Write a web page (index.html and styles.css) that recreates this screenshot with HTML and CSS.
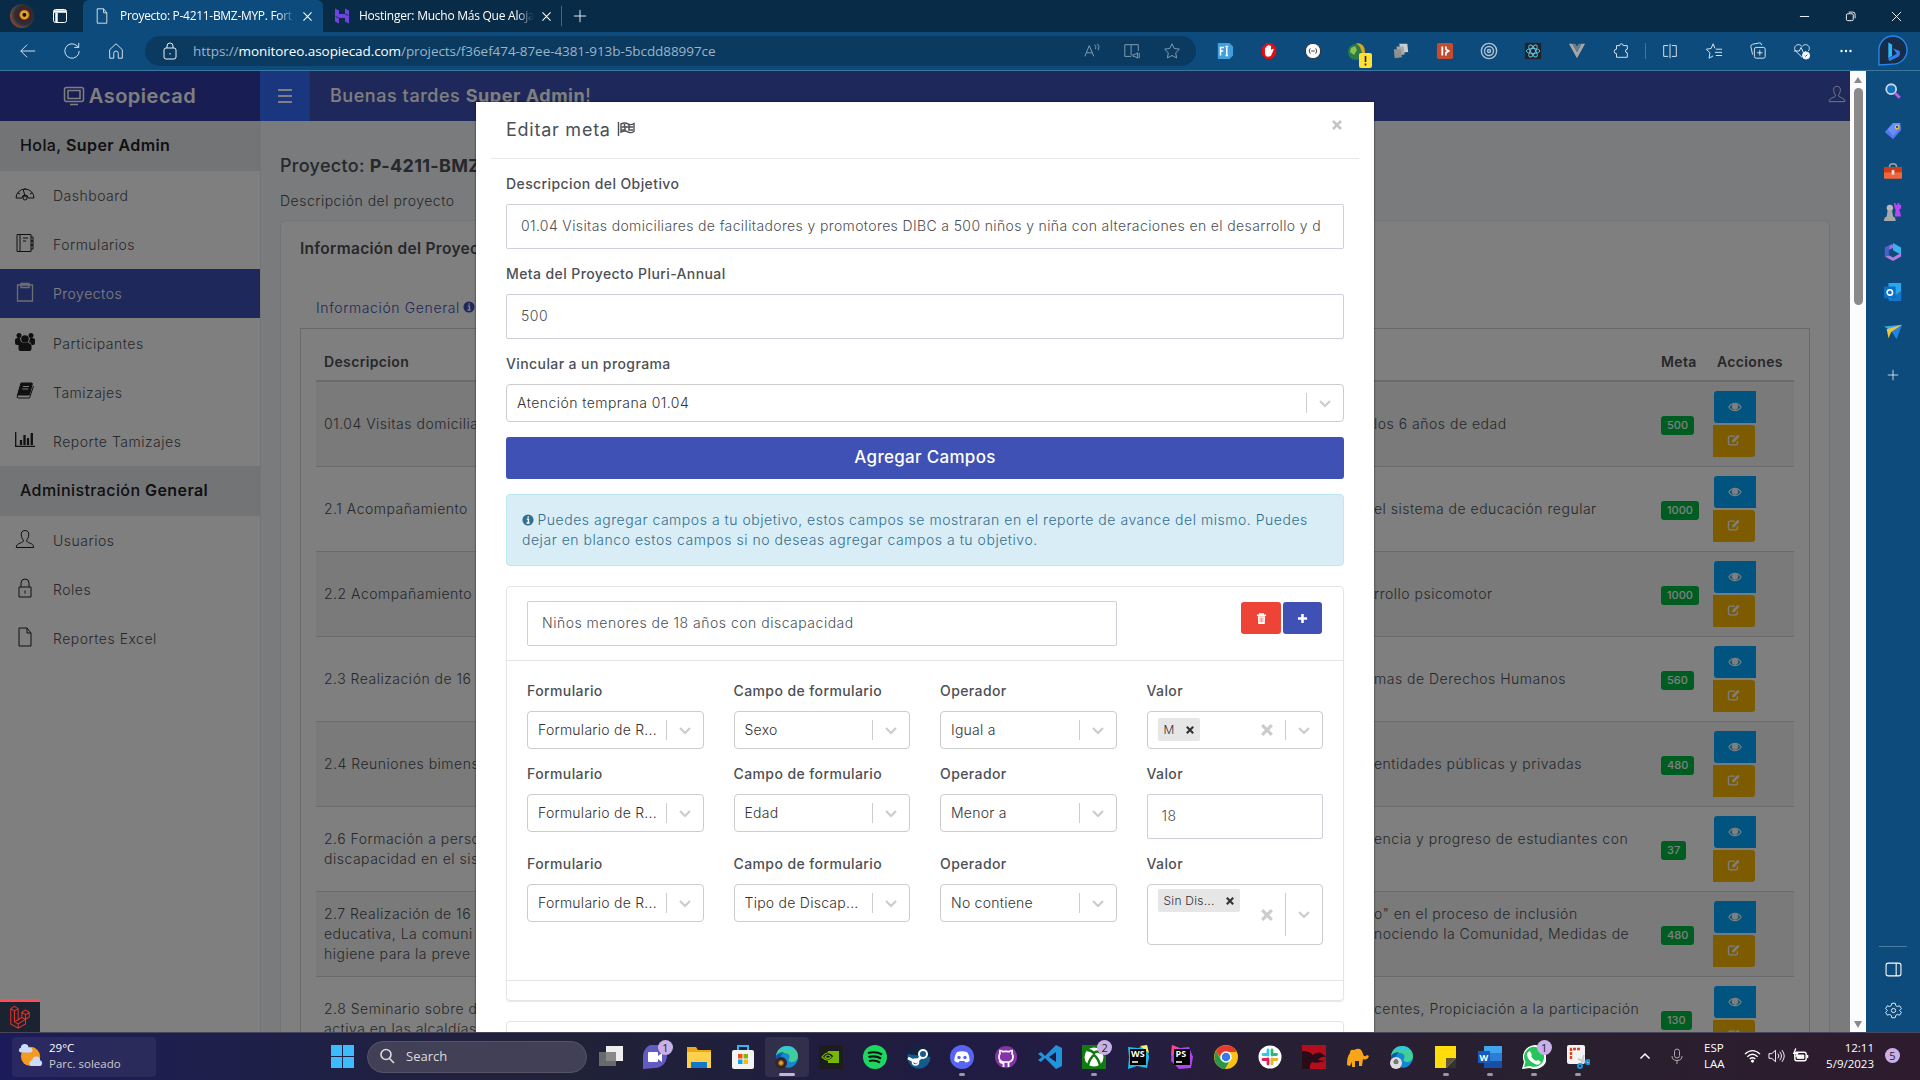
FILE: index.html
```html
<!DOCTYPE html>
<html lang="es">
<head>
  <meta charset="UTF-8">
  <meta name="viewport" content="width=device-width, initial-scale=1.0">
  <title>Proyecto: P-4211-BMZ-MYP</title>
  <link rel="stylesheet" href="styles.css">
</head>
<body>
  <svg class="sprite">
    <symbol id="x" viewBox="0 0 16 16"><path d="M3 3l10 10M13 3L3 13"/></symbol>
    <symbol id="plus" viewBox="0 0 16 16"><path d="M8 1v14M1 8h14"/></symbol>
    <symbol id="file" viewBox="0 0 20 20"><path d="M4 1h8l4 5v13H4zM12 1v5h4"/></symbol>
    <symbol id="lock" viewBox="0 0 20 20"><path d="M4 9h12v10H4zM6 9V5a4 4 0 0 1 8 0v4M10 12.5v3"/></symbol>
    <symbol id="chev" viewBox="0 0 20 20"><path d="M5 8l5 5 5-5" stroke-width="2.2"/></symbol>
    <symbol id="clear" viewBox="0 0 20 20"><path d="M6 6l8 8M14 6l-8 8" stroke-width="2.6"/></symbol>
    <symbol id="eye" viewBox="0 0 16 12"><path d="M1 6c3.500-5.500 10.500-5.500 14 0-3.500 5.500-10.500 5.500-14 0z" stroke-width="1.300"/><circle cx="8" cy="5.500" r="3.300" fill="currentColor"/></symbol>
    <symbol id="edit" viewBox="0 0 16 14"><path d="M12 8.500v2.300a2 2 0 0 1-2 2H3.500a2 2 0 0 1-2-2V4.500a2 2 0 0 1 2-2H9" stroke-width="1.500"/><path d="M6 9.500V7.300L12.500 1l2 2L8.200 9.500z" fill="currentColor" stroke="none"/></symbol>
    <symbol id="info" viewBox="0 0 14 14"><circle cx="7" cy="7" r="6.500" fill="currentColor" stroke="none"/><path class="cut" d="M5.500 6H7.500v4.500M5.300 10.500h3.600M6.500 3.500h1.500" stroke-width="1.700"/></symbol>
    <symbol id="user" viewBox="0 0 20 20"><path d="M10 1.500c-3 0-4 2-3.700 4.500.2 2.500 1 4 2 5 .3 1.700-.8 2.200-3 3-2.500 1-4 2-4 4.500h17.400c0-2.500-1.500-3.500-4-4.500-2.200-.8-3.300-1.300-3-3 1-1 1.800-2.500 2-5 .3-2.500-.7-4.500-3.700-4.500z"/></symbol>
    <symbol id="edge" viewBox="0 0 24 24"><circle cx="12" cy="12" r="11" fill="#1687d2"/><path d="M1 11C2 4 7 1 12 1c7 0 11 5 11 10 0 4-3 6-6 6-3 0-4-1-3-3 2-4-1-6-5-6-4 0-7 2-8 3z" fill="#3fcf9a"/><path d="M1 11c2-3 5-4 8-4-4 3-5 9-1 13 2 2 5 3 8 2-6 3-16 0-15-11z" fill="#0c59a4"/><path d="M3 6c5-6 14-6 18 0-6-3-12-3-18 0z" fill="#35c1f1"/></symbol>
  </svg>

  <header class="tabbar">
    <div class="profile"></div>
    <svg class="ic workspace" viewBox="0 0 16 16"><rect x="1.500" y="1.500" width="13" height="13" rx="2"/><path d="M2 3.500h12M4.500 5v9" stroke-width="2.500"/></svg>
    <div class="tab active">
      <svg class="ic tab-icon"><use href="#file"/></svg>
      <span class="tab-title first">Proyecto: P-4211-BMZ-MYP. Fort</span>
      <svg class="ic close"><use href="#x"/></svg>
    </div>
    <div class="tab second">
      <svg class="tab-icon" viewBox="0 0 16 16"><path d="M1 .500l4 2V6h5.500l4.500 2.500H1zM11 .500l4 2v5l-4-2zM15 15.500l-4-2V10H5.500L1 7.500h14zM5 15.500l-4-2v-5l4 2z" fill="#6f43df"/></svg>
      <span class="tab-title">Hostinger: Mucho Más Que Aloja</span>
      <svg class="ic close"><use href="#x"/></svg>
    </div>
    <span class="tab-sep"></span>
    <svg class="ic new-tab"><use href="#plus"/></svg>
    <div class="window-buttons">
      <svg class="ic" viewBox="0 0 12 12"><path d="M1 6h10"/></svg>
      <svg class="ic" viewBox="0 0 12 12"><rect x="1.500" y="3" width="7.500" height="7.500" rx="1.500"/><path d="M4 1.200h4.500a2.500 2.500 0 0 1 2.500 2.500V8"/></svg>
      <svg class="ic" viewBox="0 0 12 12"><path d="M1 1l10 10M11 1L1 11"/></svg>
    </div>
  </header>

  <div class="toolbar">
    <div class="nav-buttons">
      <svg class="ic" viewBox="0 0 20 20"><path d="M9 3l-7 7 7 7M2 10h16"/></svg>
      <svg class="ic" viewBox="0 0 20 20"><path d="M18 10a8 8 0 1 1-2.500-5.800L17.500 6M17.500 1v5h-5"/></svg>
      <svg class="ic" viewBox="0 0 20 20"><path d="M3 8.500L10 2l7 6.500V18h-4.500v-5.500a2.500 2.500 0 0 0-5 0V18H3z"/></svg>
    </div>
    <div class="url-bar">
      <svg class="ic url-lock" viewBox="0 0 18 20"><rect x="3" y="7" width="12" height="11" rx="2"/><path d="M6 7V5a3 3 0 0 1 6 0v2M9 12v1.500"/></svg>
      <span class="url">https://<b>monitoreo.asopiecad.com</b>/projects/f36ef474-87ee-4381-913b-5bcdd88997ce</span>
      <div class="url-icons">
        <svg class="ic" viewBox="0 0 20 20"><path d="M2 16L7 4l5 12M4 12h6M13 3q2 2 1 5M16 2q3 3 1 7"/></svg>
        <svg class="ic" viewBox="0 0 20 20"><path d="M9 16H2V3h7v12M9 3h8v7M11 14h2l3-2v6l-3-2h-2zM18 12v6"/></svg>
        <svg class="ic" viewBox="0 0 20 20"><path d="M10 2l2.500 5.200 5.700.8-4.100 4 1 5.700L10 15l-5.100 2.700 1-5.700-4.100-4 5.700-.8z"/></svg>
      </div>
    </div>
    <div class="extensions">
      <svg viewBox="0 0 20 20"><path d="M2 1h13l4 4v10l-4 4H2z" fill="#419fde"/><path d="M5 15V6h4M5 10h3M12 6v9M10.500 5h3M10.500 15h3" stroke="#fff" stroke-width="1.700" fill="none"/></svg>
      <svg viewBox="0 0 20 20"><path d="M7 1h6l5 5v8l-5 5H7l-5-5V6z" fill="#e40d12"/><path d="M5.500 10V6.500q1-1 1.700 0V4.500q1-1 1.700 0V3.500q1-1 1.700 0v1q1-1 1.700 0V9l2-1.500q1.500 0 .7 1.500L13 13.500q-1 3-3.500 3-4 0-4-4z" fill="#fff"/></svg>
      <svg viewBox="0 0 20 20"><circle cx="10" cy="10" r="8.500" fill="#fff" stroke="#222"/><path d="M7 7Q4.500 10 7 13M13 7q2.500 3 0 6M8 10h4" stroke="#333" fill="none"/></svg>
      <svg class="warn-ext" viewBox="0 0 26 26"><circle cx="9" cy="10" r="8" fill="#2a7a4c"/><path d="M9 1q9 0 9 9 0 5-4 7l-1-4 2-2-2-6z" fill="#d8a51c"/><path d="M4 6l4-2 2 4-3 5-4-3z" fill="#8bc34a"/><rect x="12" y="11" width="13" height="15" rx="2" fill="#ffe034"/><path d="M18.500 14v6M18.500 21.500v2" stroke="#222" stroke-width="1.600"/></svg>
      <svg viewBox="0 0 20 20"><path d="M8 2h9l1 9-8 1z" fill="#ccc"/><path d="M5 5h8l1 9-8 1z" fill="#aaa"/><path d="M2 8h8l1 9-8 1z" fill="#8f8f8f"/></svg>
      <svg viewBox="0 0 20 20"><rect x="1" y="1" width="18" height="18" rx="2" fill="#c54b2f"/><path d="M7 5v10M11 5v3l3 2-3 2v3" stroke="#fff" stroke-width="2" fill="none"/></svg>
      <svg viewBox="0 0 20 20" fill="none" stroke="#aec1d1" stroke-width="1.600"><circle cx="10" cy="10" r="8.500"/><circle cx="10" cy="10" r="5"/><circle cx="10" cy="10" r="1.700"/></svg>
      <svg viewBox="0 0 20 20"><path d="M1 1h18v18H1z" fill="#20232a"/><g fill="none" stroke="#61c9e8"><ellipse cx="10" cy="10" rx="7.500" ry="2.800"/><ellipse cx="10" cy="10" rx="7.500" ry="2.800" transform="rotate(60 10 10)"/><ellipse cx="10" cy="10" rx="7.500" ry="2.800" transform="rotate(120 10 10)"/></g></svg>
      <svg viewBox="0 0 20 20"><path d="M1 2h4l5 9 5-9h4l-9 16z" fill="#a6a6a6"/><path d="M5 2h3l2 3 2-3h3l-5 9z" fill="#6d7c89"/></svg>
      <svg class="ic" viewBox="0 0 20 20"><path d="M5 4h3.500a2 2 0 0 1 4 0H17v4a2 2 0 0 0 0 4v5H5v-4a2.500 2.500 0 1 1 0-5z"/></svg>
    </div>
    <span class="tool-sep"></span>
    <div class="tools">
      <svg class="ic" viewBox="0 0 20 20"><path d="M8 4H3v12h5M12 4h5v12h-5M10 2v16"/></svg>
      <svg class="ic" viewBox="0 0 20 20"><path d="M11 7L9 2 6.800 7.200 1.500 8l4 4-1 6L9 15.500M12 8h7M11 11.500h8M12 15h7"/></svg>
      <svg class="ic" viewBox="0 0 20 20"><rect x="6" y="6" width="12" height="12" rx="2"/><path d="M12 9v6M9 12h6M4 14L2 5q0-2 2-2.500L12 1q2 0 2 2.500"/></svg>
      <svg class="ic" viewBox="0 0 20 20"><path d="M10 17L3 10C-1 5 6 0 10 5c4-5 11 0 7 5M1 10h6l2-4 3 7 2-3"/><circle cx="14.500" cy="15" r="4" fill="#fff"/><path d="M13 15l1 1 2-2" stroke="#0c4a7a"/></svg>
      <svg class="ic" viewBox="0 0 20 20"><g fill="#fff" stroke="none"><circle cx="5" cy="10" r="1.300"/><circle cx="10" cy="10" r="1.300"/><circle cx="15" cy="10" r="1.300"/></g></svg>
    </div>
    <svg class="bing" viewBox="0 0 32 32"><path d="M1 31V16A15 15 0 1 1 16 30z" fill="#182c48" stroke="#2288ee" stroke-width="1.500"/><path d="M11 7l4 2v12l-4 3z" fill="#28b9fa"/><path d="M16 13l7 3q2 5-3 7l-8 4-1-3 9-5z" fill="#337df0"/></svg>
  </div>

  <div class="browser-body">
    <div class="page">
      <div class="app-header">
        <div class="brand"><svg class="ic" viewBox="0 0 22 20"><rect x="1.500" y="1.500" width="19" height="14" rx="2" stroke-width="1.500"/><path d="M5 4.500h12v8H5zM7 18.500h8" stroke-width="1.500"/></svg>Asopiecad</div>
        <div class="toggle"><i></i><i></i><i></i></div>
        <div class="greeting">Buenas tardes <b>Super Admin</b>!</div>
        <svg class="ic header-user"><use href="#user"/></svg>
      </div>
      <div class="app-body">
        <nav class="sidebar">
          <div class="side-title">Hola, <b>Super Admin</b></div>
          <a><svg class="ic" viewBox="0 0 20 20"><path d="M1 14a9 9 0 1 1 18 0h-6a3 3 0 0 0-6 0zM10 12L8 5M3 9l2 1M10 4v2M17 9l-2 1"/><circle cx="10" cy="14" r="2"/></svg>Dashboard</a>
          <a><svg class="ic" viewBox="0 0 20 20"><path d="M2 1.500h14v17H2zM5 1.500v17M8 5h5M8 8h3M16 4h2v4h-2M16 8h2v4h-2M16 12h2v4h-2"/></svg>Formularios</a>
          <a class="active"><svg class="ic" viewBox="0 0 20 20"><path d="M2.500 3h15v16h-15zM6 1.500h8v4H6z" stroke-width="1.300"/></svg>Proyectos</a>
          <a><svg class="ic" viewBox="0 0 20 20"><g fill="currentColor" stroke="none"><circle cx="4" cy="3.500" r="2.500"/><circle cx="16" cy="3.500" r="2.500"/><circle cx="10" cy="7" r="3.800"/><path d="M0 11V8q0-2 3-2h2q0 3 2 5-3 0-3 2H2q-2 0-2-2zM20 11V8q0-2-3-2h-2q0 3-2 5 3 0 3 2h2q2 0 2-2zM3.500 17v-3q0-4 3-4 3 2 7 0 3 0 3 4v3q0 2-2 2h-9q-2 0-2-2z"/></g></svg>Participantes</a>
          <a><svg class="ic" viewBox="0 0 20 20"><path d="M6 2h10.500q1 0 .8 1l-3 11H2.500z" fill="currentColor"/><path d="M2.500 14q-1.500 3 1 3h11l4-12"/><path d="M8 5.500h6M7.300 8h6" stroke="#fff"/></svg>Tamizajes</a>
          <a><svg class="ic" viewBox="0 0 20 20"><path d="M.700 2v14.300H20" stroke-width="1.300"/><path d="M6 10v5M9.500 5v10M13 8v7M16.800 3v12" stroke-width="2.300"/></svg>Reporte Tamizajes</a>
          <div class="side-title admin">Administración <b>General</b></div>
          <a><svg class="ic"><use href="#user"/></svg>Usuarios</a>
          <a><svg class="ic"><use href="#lock"/></svg>Roles</a>
          <a><svg class="ic"><use href="#file"/></svg>Reportes Excel</a>
        </nav>
        <main class="main">
          <h1>Proyecto: <b>P-4211-BMZ</b></h1>
          <p class="subtitle">Descripción del proyecto</p>
          <section class="project-card">
            <h2>Información del Proyecto</h2>
            <div class="tab-link">Información General <svg class="ic"><use href="#info"/></svg></div>
            <div class="tab-box">
              <table class="goals">
                <thead><tr><th class="desc">Descripcion</th><th class="meta">Meta</th><th>Acciones</th></tr></thead>
                <tbody>
                  <tr><td><p><span>01.04 Visitas domicilia</span>los 6 años de edad</p></td><td><em>500</em></td><td><i class="view"><svg class="ic"><use href="#eye"/></svg></i><i class="pen"><svg class="ic"><use href="#edit"/></svg></i></td></tr>
                  <tr><td><p><span>2.1 Acompañamiento</span>el sistema de educación regular</p></td><td><em>1000</em></td><td><i class="view"><svg class="ic"><use href="#eye"/></svg></i><i class="pen"><svg class="ic"><use href="#edit"/></svg></i></td></tr>
                  <tr><td><p><span>2.2 Acompañamiento</span>rrollo psicomotor</p></td><td><em>1000</em></td><td><i class="view"><svg class="ic"><use href="#eye"/></svg></i><i class="pen"><svg class="ic"><use href="#edit"/></svg></i></td></tr>
                  <tr><td><p><span>2.3 Realización de 16 c</span>mas de Derechos Humanos</p></td><td><em>560</em></td><td><i class="view"><svg class="ic"><use href="#eye"/></svg></i><i class="pen"><svg class="ic"><use href="#edit"/></svg></i></td></tr>
                  <tr><td><p><span>2.4 Reuniones bimens</span>entidades públicas y privadas</p></td><td><em>480</em></td><td><i class="view"><svg class="ic"><use href="#eye"/></svg></i><i class="pen"><svg class="ic"><use href="#edit"/></svg></i></td></tr>
                  <tr><td><p><span>2.6 Formación a perso</span>encia y progreso de estudiantes con</p><p><span>discapacidad en el sis</span></p></td><td><em>37</em></td><td><i class="view"><svg class="ic"><use href="#eye"/></svg></i><i class="pen"><svg class="ic"><use href="#edit"/></svg></i></td></tr>
                  <tr><td><p><span>2.7 Realización de 16 c</span>o" en el proceso de inclusión</p><p><span>educativa, La comuni</span>nociendo la Comunidad, Medidas de</p><p><span>higiene para la preve</span></p></td><td><em>480</em></td><td><i class="view"><svg class="ic"><use href="#eye"/></svg></i><i class="pen"><svg class="ic"><use href="#edit"/></svg></i></td></tr>
                  <tr><td><p><span>2.8 Seminario sobre d</span>centes, Propiciación a la participación</p><p><span>activa en las alcaldías</span></p></td><td><em>130</em></td><td><i class="view"><svg class="ic"><use href="#eye"/></svg></i><i class="pen"><svg class="ic"><use href="#edit"/></svg></i></td></tr>
                </tbody>
              </table>
            </div>
          </section>
        </main>
      </div>

      <div class="overlay">
        <div class="modal">
          <div class="modal-header">
            <h3>Editar meta <svg class="ic" viewBox="0 0 18 16"><path d="M1.500 1v14M4 3q4-2 7 0 3 1.500 6-.5v8q-3 2-6 .5-3-2-7 0z" stroke-width="1.400"/><path d="M4.500 6h3V3M8 6h4v3h4M8 6v3H4.500M12 6V3.500M12 6h4" stroke-width="1.500"/></svg></h3>
            <svg class="ic modal-close"><use href="#clear"/></svg>
          </div>
          <div class="modal-body">
            <label>Descripcion del Objetivo</label>
            <input class="field long" type="text" value="01.04 Visitas domiciliares de facilitadores y promotores DIBC a 500 niños y niña con alteraciones en el desarrollo y d">
            <label>Meta del Proyecto Pluri-Annual</label>
            <input class="field" type="text" value="500">
            <label>Vincular a un programa</label>
            <div class="select"><span>Atención temprana 01.04</span><svg class="ic arrow"><use href="#chev"/></svg></div>
            <button class="add-fields">Agregar Campos</button>
            <div class="alert"><svg class="ic"><use href="#info"/></svg> Puedes agregar campos a tu objetivo, estos campos se mostraran en el reporte de avance del mismo. Puedes<br>dejar en blanco estos campos si no deseas agregar campos a tu objetivo.</div>
            <div class="field-card">
              <div class="field-card-header">
                <input class="field" type="text" value="Niños menores de 18 años con discapacidad">
                <div class="card-actions">
                  <button class="danger"><svg class="ic" viewBox="0 0 12 12"><path d="M1 2.500h10M4 2V1h4v1" stroke-width="1.500"/><path d="M2 3.500h8L9.500 12h-7z" fill="currentColor" stroke="none"/><path d="M4.500 5v5M6 5v5M7.500 5v5" stroke="#ed4437" stroke-width=".6"/></svg></button>
                  <button><svg class="ic" viewBox="0 0 12 12"><path d="M6 1v10M1 6h10" stroke-width="2.800"/></svg></button>
                </div>
              </div>
              <div class="field-card-body">
                <div class="cell"><label>Formulario</label><div class="select"><span>Formulario de R...</span><svg class="ic arrow"><use href="#chev"/></svg></div></div>
                <div class="cell"><label>Campo de formulario</label><div class="select"><span>Sexo</span><svg class="ic arrow"><use href="#chev"/></svg></div></div>
                <div class="cell"><label>Operador</label><div class="select"><span>Igual a</span><svg class="ic arrow"><use href="#chev"/></svg></div></div>
                <div class="cell"><label>Valor</label><div class="select"><span class="chips"><span class="chip">M<svg class="ic"><use href="#clear"/></svg></span></span><svg class="ic clear"><use href="#clear"/></svg><svg class="ic arrow"><use href="#chev"/></svg></div></div>

                <div class="cell"><label>Formulario</label><div class="select"><span>Formulario de R...</span><svg class="ic arrow"><use href="#chev"/></svg></div></div>
                <div class="cell"><label>Campo de formulario</label><div class="select"><span>Edad</span><svg class="ic arrow"><use href="#chev"/></svg></div></div>
                <div class="cell"><label>Operador</label><div class="select"><span>Menor a</span><svg class="ic arrow"><use href="#chev"/></svg></div></div>
                <div class="cell"><label>Valor</label><input class="field" type="text" value="18"></div>

                <div class="cell"><label>Formulario</label><div class="select"><span>Formulario de R...</span><svg class="ic arrow"><use href="#chev"/></svg></div></div>
                <div class="cell"><label>Campo de formulario</label><div class="select"><span>Tipo de Discap...</span><svg class="ic arrow"><use href="#chev"/></svg></div></div>
                <div class="cell"><label>Operador</label><div class="select"><span>No contiene</span><svg class="ic arrow"><use href="#chev"/></svg></div></div>
                <div class="cell"><label>Valor</label><div class="select tall"><span class="chips"><span class="chip">Sin Dis...<svg class="ic"><use href="#clear"/></svg></span></span><svg class="ic clear"><use href="#clear"/></svg><svg class="ic arrow"><use href="#chev"/></svg></div></div>
              </div>
              <div class="field-card-footer"></div>
            </div>
            <div class="field-card next"></div>
          </div>
        </div>
      </div>
      <div class="debugbar"><svg viewBox="0 0 24 26" fill="none" stroke="#e5322c" stroke-width="1.100"><path d="M2 4l4-2.500L10 4v12l4-2.500V8l4-2.500L22 8v5l-4 2.500v5L10 25l-8-4.500zM2 4l4 2.500L10 4M6 6.500V18l4 2.500 8-5M10 16l-4 2M14 8l4 2.500L22 8M18 10.500v5l-4-2M10 20.500V25"/></svg></div>
    </div>

    <div class="scrollbar"><i class="up"></i><i class="thumb"></i><i class="down"></i></div>

    <aside class="edge-bar">
      <svg viewBox="0 0 20 20"><circle cx="8" cy="8" r="5.500" fill="#1170bd" stroke="#c9d8e6" stroke-width="2"/><path d="M12.500 12.500l5 5" stroke="#c85af0" stroke-width="3"/></svg>
      <svg viewBox="0 0 20 20"><path d="M10 1h8l1 8-9 10-9-8z" fill="#6b8ff8"/><path d="M1 11l9 8 9-10v-3l-9 9-6-7z" fill="#4a66e8" opacity=".6"/><circle cx="14.500" cy="5.500" r="1.900" fill="#16447a" stroke="#f6c628" stroke-width="1.300"/></svg>
      <svg viewBox="0 0 20 20"><path d="M6 6q0-4 4-4t4 4" fill="none" stroke="#9aa5ad" stroke-width="1.700"/><rect x="0" y="5.500" width="20" height="13" rx="1" fill="#f0663a"/><path d="M0 5.500h20v6H0z" fill="#ce3d14"/><rect x="8.500" y="9" width="3" height="5" fill="#e4e4e4"/></svg>
      <svg viewBox="0 0 20 20"><path d="M11 0h2v2h2V0h2v2h2v4l-2 1 2 8h-7l1-8-1-1z" fill="#bd44f5"/><circle cx="6.500" cy="5.500" r="3.500" fill="#b9b9b9"/><path d="M4 8h5l1 7q3 1 3 5H0q0-4 3-5z" fill="#a8a8a8"/></svg>
      <svg viewBox="0 0 20 20"><path d="M9 1L1 5v11l4-2V8l6-3z" fill="#9e70dd"/><path d="M10 0l9 5v8l-9-5V3z" fill="#3bb0ef"/><path d="M1 15l9 5 9-5v-4l-9 5-4-2z" fill="#b47ce0"/><path d="M10 0L6 4v9l-5 3V5z" fill="#385bc4" opacity=".8"/></svg>
      <svg viewBox="0 0 20 20"><path d="M5 0h14v18H5z" fill="#2aa8eb"/><path d="M5 19l14-10v11H5z" fill="#1675c8"/><rect x="0" y="4" width="13" height="13" rx="1" fill="#0871c9"/><circle cx="6.500" cy="10.500" r="3" fill="none" stroke="#fff" stroke-width="1.800"/></svg>
      <svg viewBox="0 0 20 20"><path d="M0 4l20-2-10 8z" fill="#37a8ef"/><path d="M20 2l-6 16-6-9z" fill="#1f83df"/><path d="M3 7l17-5L8 10l-3 7z" fill="#f6c431"/></svg>
      <svg class="ic add"><use href="#plus"/></svg>
      <div class="edge-bottom">
        <svg class="ic" viewBox="0 0 16 16"><rect x="1" y="2" width="14" height="12" rx="2"/><path d="M10.500 2v12"/></svg>
        <svg class="ic" viewBox="0 0 20 20"><circle cx="10" cy="10" r="2.500"/><path d="M8 1.500h4l.7 2.800 1.800 1 2.800-.8 2 3.400-2.100 2.100 2.100 2.100-2 3.400-2.800-.8-1.800 1-.7 2.800H8l-.7-2.800-1.800-1-2.800.8-2-3.400L2.800 10 .7 7.900l2-3.400 2.800.8 1.800-1z"/></svg>
      </div>
    </aside>
  </div>

  <footer class="taskbar">
    <div class="weather">
      <svg viewBox="0 0 26 26"><circle cx="13" cy="14" r="10" fill="#f49a1e"/><g fill="#cbdcfa"><circle cx="7" cy="5" r="4"/><rect x="1" y="5" width="14" height="5" rx="2.500"/><circle cx="19" cy="18" r="4"/><rect x="12" y="18" width="13" height="6" rx="3"/></g></svg>
      <div>29°C<br><span>Parc. soleado</span></div>
    </div>
    <svg class="start" viewBox="0 0 24 24"><path d="M0 0h11.500v11.500H0zM12.500 0H24v11.500H12.500zM0 12.500h11.500V24H0zM12.500 12.500H24V24H12.500z" fill="#3cbcfa"/></svg>
    <div class="search"><svg class="ic" viewBox="0 0 16 16"><circle cx="7" cy="6.500" r="5"/><path d="M10.500 10.500L15 15"/></svg>Search</div>
    <div class="apps">
      <span><svg viewBox="0 0 24 24"><path d="M7 1h17v15H7z" fill="#eee"/><path d="M0 7h17v14H0z" fill="#777" opacity=".85"/></svg></span>
      <span><svg viewBox="0 0 24 24"><path d="M0 24V12a12 12 0 1 1 12 11z" fill="#625bc4"/><rect x="5" y="7" width="10" height="10" rx="1" fill="#fff"/><path d="M15 11l4-3v9l-4-3z" fill="#fff"/></svg><b>1</b></span>
      <span><svg viewBox="0 0 24 24"><path d="M0 2h9l2 3h13v18H0z" fill="#e9a916"/><path d="M0 7h24v16H0z" fill="#ffd04c"/><path d="M4 17h16v6H4z" fill="#1478ca"/></svg></span>
      <span><svg viewBox="0 0 24 24"><path d="M7 6V1h10v5" fill="none" stroke="#35b4f2" stroke-width="2"/><rect x="1" y="5" width="22" height="19" rx="2" fill="#f3f3f3"/><path d="M7 9h4.500v4.500H7z" fill="#f25022"/><path d="M12.500 9H17v4.500h-4.500z" fill="#7fba00"/><path d="M7 14.500h4.500V19H7z" fill="#00a4ef"/><path d="M12.500 14.500H17V19h-4.500z" fill="#ffb900"/></svg></span>
      <span class="open current"><svg><use href="#edge"/></svg><i class="avatar"></i></span>
      <span><svg viewBox="0 0 24 24"><path d="M0 0h24v24H0z" fill="#1d1d1d"/><path d="M9 6h11v12H9z" fill="#76b900"/><path d="M3 12q6-8 12-1-5 8-12 1zM6 12q3-4 6 0-3 3-6 0z" fill="#1d1d1d" stroke="#76b900" stroke-width="1.200"/></svg></span>
      <span><svg viewBox="0 0 24 24"><circle cx="12" cy="12" r="12" fill="#1ed760"/><path d="M5 8q8-2 14 1.500M5.500 12q7-2 12.500 1.500M6 16q6-1.500 11 1.500" fill="none" stroke="#111" stroke-width="2.200"/></svg></span>
      <span><svg viewBox="0 0 24 24"><circle cx="12" cy="12" r="11.500" fill="#135a8d"/><path d="M0 9A12 12 0 0 1 24 12z" fill="#14233f"/><path d="M1 13l8 4 7-7" stroke="#fff" stroke-width="3" fill="none"/><circle cx="16" cy="9" r="4" fill="#135a8d" stroke="#fff" stroke-width="2"/><circle cx="8.500" cy="17" r="3" fill="none" stroke="#fff" stroke-width="1.500"/></svg></span>
      <span class="open"><svg viewBox="0 0 24 24"><circle cx="12" cy="12" r="12" fill="#5865f2"/><path d="M7 7q5-1.500 10 0 3 4 2.500 9-2 1.500-4 1.500l-1-1.500h-5l-1 1.500q-2 0-4-1.500Q4 11 7 7z" fill="#fff"/><circle cx="9" cy="12.500" r="1.700" fill="#5865f2"/><circle cx="15" cy="12.500" r="1.700" fill="#5865f2"/></svg></span>
      <span><svg viewBox="0 0 24 24"><circle cx="12" cy="12" r="11" fill="#8534a8"/><path d="M9.500 22v-4q-3 .5-4-2M14.500 22v-5" fill="none" stroke="#fff" stroke-width="1.800"/><path d="M9 17q-4-1-4-5 0-2 1-3.500-.5-1.500 0-3 2 0 3 1.200 3-.6 6 0 1-1.200 3-1.200.5 1.500 0 3 1 1.500 1 3.500 0 4-4 5z" fill="#8534a8" stroke="#fff" stroke-width="1.700"/></svg></span>
      <span><svg viewBox="0 0 24 24"><path d="M18 0l6 3v18l-6 3L7 13l-4 4-3-2 4-3-4-3 3-2 4 4z" fill="#2292db"/><path d="M18 7v10l-7-5z" fill="#1d1c43"/></svg></span>
      <span class="open"><svg viewBox="0 0 24 24"><path d="M0 0h24v24H0z" fill="#107c10"/><circle cx="12" cy="12" r="9.500" fill="#fff"/><path d="M5 5q4 0 7 3 3-3 7 0M6 20q2-7 6-10 4 3 6 10" fill="none" stroke="#107c10" stroke-width="2.500"/></svg><b>2</b></span>
      <span><svg viewBox="0 0 24 24"><path d="M2 2l10 1 9-3 2 12-2 11-10-2-9 3 1-12z" fill="#18bdec"/><path d="M14 1l7-1 2 8z" fill="#f2f16a"/><path d="M4 4h16v16H4z" fill="#000"/><text x="5" y="12" class="app-text">WS</text><path d="M6 17h6" stroke="#fff" stroke-width="1.500"/></svg></span>
      <span><svg viewBox="0 0 24 24"><path d="M2 0l8 3 9-1 4 10-2 11-12 1-8-8z" fill="#af45ec"/><path d="M2 0l7 3-8 8z" fill="#ff438f"/><path d="M4 4h16v16H4z" fill="#000"/><text x="5.500" y="12" class="app-text">PS</text><path d="M6 17h6" stroke="#fff" stroke-width="1.500"/></svg></span>
      <span><svg viewBox="0 0 24 24"><circle cx="12" cy="12" r="12" fill="#fbc116"/><path d="M2 6A12 12 0 0 1 23 7H12l-4 8z" fill="#e33b2e"/><path d="M2 6A12 12 0 0 0 11 24l5-9H7z" fill="#279847"/><circle cx="12" cy="12" r="5" fill="#327be8" stroke="#fff" stroke-width="1.500"/></svg></span>
      <span><svg viewBox="0 0 24 24"><circle cx="12" cy="12" r="11.500" fill="#fff"/><g fill="none" stroke-width="2.800" stroke-linecap="round"><path d="M10 5v5M5 9.500h4" stroke="#36c5f0"/><path d="M14 5v5M14.500 9.500h4" stroke="#2eb67d"/><path d="M14 14v5M14 14.500h5" stroke="#ecb22e"/><path d="M10 14v5M5 14.500h4" stroke="#e01e5a"/></g></svg></span>
      <span><svg viewBox="0 0 24 24"><path d="M0 0h24v24H0z" fill="#b40d1d"/><path d="M0 6q8 0 11 4 6-6 13 2-5-1-8 3l7 1q-9 3-13 1-3 3-2 7H0z" fill="#280d18"/></svg></span>
      <span><svg viewBox="0 0 24 24"><path d="M1 20q0-9 3-12 0-4 4-3 7-4 9 4 1 4 4 1l2 1q-2 5-6 3l-1 7h-3v-5h-4v6H6v-5l-2 4z" fill="#f9a51a"/></svg></span>
      <span><svg><use href="#edge"/></svg><i class="avatar grey"></i></span>
      <span class="open"><svg viewBox="0 0 24 24"><path d="M1 1h21v22H1z" fill="#ffdc0b"/><path d="M22 13v10H12z" fill="#333"/><path d="M12 23v-10h10z" fill="#5e5534"/></svg></span>
      <span class="open"><svg viewBox="0 0 24 24"><path d="M6 1h18v22H6z" fill="#2b7dd6"/><path d="M6 1h18v7H6z" fill="#41a5ee"/><path d="M6 16h18v7H6z" fill="#174ea6"/><path d="M0 6h12v12H0z" fill="#185abd"/><text x="1.500" y="15.500" class="app-text">W</text></svg></span>
      <span class="open"><svg viewBox="0 0 24 24"><path d="M0 24l2-7A12 12 0 1 1 8 23z" fill="#fff"/><path d="M2 22l1.500-5A10 10 0 1 1 8 21z" fill="#25c55a"/><path d="M8 6l2 4-1 1q2 4 5 5l2-1 3 2q-2 4-6 2-7-3-8-9 0-3 3-4z" fill="#fff"/></svg><b>1</b></span>
      <span class="open"><svg viewBox="0 0 24 24"><rect x="1" y="0" width="18" height="19" rx="2" fill="#f3f3f3"/><path d="M5 14V4h10" fill="none" stroke="#d64525" stroke-width="2.500" stroke-dasharray="3 1"/><path d="M12 14l11 4M18 10l-3 10" stroke="#ccc" stroke-width="2"/><circle cx="14" cy="21" r="2" fill="none" stroke="#1a91dc" stroke-width="2"/><circle cx="22" cy="17" r="2" fill="none" stroke="#1a91dc" stroke-width="2"/></svg></span>
    </div>
    <div class="tray">
      <svg class="ic caret" viewBox="0 0 12 12"><path d="M1.500 8.500L6 4l4.500 4.500" stroke-width="1.500"/></svg>
      <svg class="ic mic" viewBox="0 0 12 16"><rect x="3.500" y="1" width="5" height="9" rx="2.500"/><path d="M1 8q0 4.500 5 4.500T11 8M6 12.500V16"/></svg>
      <div class="lang">ESP<br>LAA</div>
      <svg class="ic" viewBox="0 0 18 16"><path d="M1 6q8-7.500 16 0M3.500 8.700q5.500-5 11 0M6 11.200q3-2.700 6 0" stroke-width="1.400"/><circle cx="9" cy="13.500" r="1.200" fill="#fff"/></svg>
      <svg class="ic" viewBox="0 0 18 16"><path d="M1 5.500h3L8 2v12l-4-3.500H1zM10.500 5.500q2 2.500 0 5M12.500 3.500q3.500 4.500 0 9M14.700 1.700q5 6.300 0 12.600"/></svg>
      <svg class="ic" viewBox="0 0 18 16"><rect x="3" y="4" width="12" height="9" rx="2" stroke-width="1.500"/><path d="M5.500 7h7v3.500h-7z" fill="#fff"/><path d="M16.500 7v3M4 0L2 5h4l-2 4" stroke-width="1.500"/></svg>
      <div class="clock">12:11<br>5/9/2023</div>
      <span class="count">5</span>
    </div>
  </footer>
</body>
</html>
```

FILE: styles.css
```css
* {
  box-sizing: border-box;
}
body {
  margin: 0;
  width: 1920px;
  height: 1080px;
  overflow: hidden;
  font-family: Inter, "Open Sans", sans-serif;
  font-size: 14px;
  color: #4d5055;
}
svg {
  display: block;
  flex-shrink: 0;
}
.sprite {
  width: 0;
  height: 0;
  position: absolute;
}
.ic {
  fill: none;
  stroke: currentColor;
}
.cut {
  stroke: #fff;
}

/* browser chrome */
.tabbar, .toolbar, .taskbar {
  font-family: "Open Sans", "Noto Sans", sans-serif;
  color: #fff;
  display: flex;
  align-items: center;
}
.tabbar {
  height: 32px;
  background: #082b47;
  font-size: 12px;
}
.profile {
  width: 24px;
  height: 24px;
  margin-left: 10px;
  border-radius: 50%;
  background: radial-gradient(circle at 60% 45%, #15101a 0 8%, #e2a51f 12% 20%, #4b1b27 28%, #26333a 50%, #814434 70%);
}
.workspace {
  width: 16px;
  height: 16px;
  margin: 0 15px 0 18px;
}
.tab {
  display: flex;
  align-items: center;
  height: 32px;
  width: 240px;
  padding-left: 11px;
}
.tab.active {
  background: #0c4b7b;
  border-radius: 6px 6px 0 0;
}
.tab.second {
  width: 238px;
}
.tab-icon {
  width: 16px;
  height: 16px;
  margin-right: 10px;
}
.tab.second .tab-icon {
  margin-right: 9px;
}
.tab-title {
  width: 175px;
  margin-top: -1px;
  white-space: nowrap;
  overflow: hidden;
  letter-spacing: -0.25px;
  -webkit-mask-image: linear-gradient(90deg, #000 90%, transparent);
}
.tab-title.first {
  letter-spacing: -0.3px;
}
.close {
  width: 13px;
  height: 13px;
  margin-left: 6px;
  stroke-width: 1.300;
}
.tab-sep {
  width: 1px;
  height: 20px;
  background: #4b6679;
}
.new-tab {
  width: 14px;
  height: 14px;
  margin-left: 11px;
}
.window-buttons {
  display: flex;
  gap: 35px;
  margin: 0 18px 0 auto;
}
.window-buttons svg {
  width: 11px;
  height: 11px;
}
.toolbar {
  height: 39px;
  background: #0c4b7b;
  border-bottom: 1px solid #3c779e;
  color: #e8f1f8;
}
.nav-buttons {
  display: flex;
  gap: 26px;
  width: 145px;
  padding-left: 19px;
}
.nav-buttons svg, .extensions svg, .tools svg, .url-icons svg {
  width: 18px;
  height: 18px;
}
.url-bar {
  display: flex;
  align-items: center;
  width: 1051px;
  height: 30px;
  padding: 0 15px;
  border-radius: 15px;
  background: #0a3a60;
}
.url-lock {
  width: 18px;
  height: 20px;
  margin-left: 1px;
}
.url {
  margin-left: 14px;
  font-size: 13.500px;
  letter-spacing: -0.07px;
  color: #9db4c6;
}
.url b {
  font-weight: 400;
  color: #fff;
}
.url-icons {
  display: flex;
  gap: 22px;
  margin-left: auto;
  color: #8da5b7;
}
.extensions, .tools {
  display: flex;
  gap: 26px;
}
.extensions {
  margin-left: 20px;
}
.extensions svg.warn-ext {
  width: 26px;
  height: 26px;
  margin: 0 -7px -8px -1px;
}
.tool-sep {
  width: 1px;
  height: 16px;
  margin: 0 15px 0 15px;
  background: #3c779e;
}
.bing {
  width: 30px;
  height: 32px;
  margin-left: 23px;
}
.browser-body {
  display: flex;
  height: 961px;
}
.page {
  position: relative;
  width: 1850px;
  overflow: hidden;
  background: #f4f6fa;
}

/* app */
.app-header {
  display: flex;
  align-items: center;
  height: 50px;
  background: #3f51b5;
  color: #fff;
}
.brand, .toggle {
  display: flex;
  align-items: center;
  justify-content: center;
  height: 50px;
}
.brand {
  width: 260px;
  gap: 4px;
  padding-right: 1px;
  background: #313ba6;
  font-size: 20px;
  font-weight: 600;
  letter-spacing: 0.5px;
}
.brand svg {
  width: 22px;
  height: 20px;
}
.toggle {
  flex-direction: column;
  gap: 4px;
  width: 50px;
  background: #346dff;
}
.toggle i {
  width: 14px;
  height: 2px;
  background: #fff;
}
.greeting {
  margin: -2px 0 0 20px;
  font-size: 18px;
  font-weight: 500;
  letter-spacing: 0.55px;
}
.greeting b {
  font-weight: 700;
}
.header-user {
  width: 18px;
  height: 18px;
  margin: -4px 4px 0 auto;
}
.app-body {
  display: flex;
}
.sidebar {
  width: 261px;
  height: 911px;
  background: #fff;
  border-right: 1px solid #e5e9ef;
  letter-spacing: 0.5px;
}
.sidebar a {
  display: flex;
  align-items: center;
  height: 49.170px;
  padding-left: 15px;
  font-weight: 350;
}
.sidebar a svg {
  width: 20px;
  height: 20px;
  margin: -3px 18px 0 0;
  color: #202020;
}
.sidebar a.active {
  width: 260px;
  background: #3f51b5;
  color: #fff;
}
.sidebar a.active svg {
  color: #ddd;
}
.side-title {
  height: 50px;
  padding: 0 20px;
  line-height: 49px;
  background: #e7e9ed;
  color: #202124;
  font-size: 16px;
  font-weight: 450;
  letter-spacing: 0.4px;
}
.side-title b {
  font-weight: 600;
}
.main {
  flex: 1;
  padding: 34px 20px 0 19px;
}
.main h1 {
  margin: 0;
  font-size: 18px;
  font-weight: 450;
  line-height: 22px;
  letter-spacing: 0.3px;
  white-space: nowrap;
}
.subtitle {
  margin: 14px 0 9px;
  line-height: 20px;
  font-weight: 350;
  letter-spacing: 0.5px;
}
.project-card {
  height: 900px;
  padding: 18px 19px;
  background: #fff;
  border: 1px solid #e5e9ef;
  border-radius: 6px;
}
.project-card h2 {
  margin: 0;
  font-size: 15.500px;
  font-weight: 600;
  line-height: 20px;
  letter-spacing: 0.3px;
}
.tab-link {
  display: flex;
  align-items: center;
  gap: 3px;
  height: 20px;
  margin: 38px 0 11px 16px;
  font-weight: 350;
  letter-spacing: 0.62px;
  color: #3f51b5;
}
.tab-link svg {
  width: 12px;
  height: 12px;
}
.tab-box {
  padding: 15px 15px 0;
  height: 800px;
  border: 1px solid #ced2d8;
}
.goals {
  width: 1478px;
  table-layout: fixed;
  border-collapse: separate;
  border-spacing: 0;
}
.goals th {
  height: 38px;
  padding: 0 8px 2px;
  border-bottom: 2px solid #d3d6da;
  text-align: left;
  font-size: 14px;
  font-weight: 600;
  letter-spacing: 0.35px;
}
.goals th:last-child {
  padding-left: 5px;
}
.desc {
  width: 1337px;
}
.meta {
  width: 59px;
}
.goals td {
  height: 85px;
  padding: 0 8px;
  border-bottom: 1px solid #d3d6da;
  font-weight: 350;
  letter-spacing: 0.5px;
}
.goals tbody tr:nth-child(odd) {
  background: #f5f5f5;
}
.goals td:last-child {
  padding: 0 0 0 1px;
}
.goals p {
  display: flex;
  margin: 0;
  line-height: 20px;
  white-space: nowrap;
}
.goals p span {
  width: 1050px;
}
.goals em {
  display: inline-block;
  height: 19px;
  margin-top: 2px;
  padding: 0 6px;
  line-height: 19px;
  border-radius: 3px;
  background: #00bb44;
  color: #fff;
  font-size: 11px;
  font-style: normal;
  font-weight: 500;
  letter-spacing: 0;
}
.view, .pen {
  display: flex;
  align-items: center;
  justify-content: center;
  width: 42px;
  height: 32px;
  color: #fff;
}
.view {
  margin-left: 1px;
  background: #00a8ff;
  border-radius: 3px 0 0 3px;
}
.pen {
  margin-top: 2px;
  padding-bottom: 2px;
  background: #fab700;
  border-radius: 0 3px 3px 0;
}
.view svg, .pen svg {
  width: 14px;
  height: 12px;
}

/* modal */
.overlay {
  position: absolute;
  inset: 0;
  display: flex;
  justify-content: center;
  padding-top: 31px;
  background: rgba(0, 0, 0, 0.5);
}
.modal {
  width: 898px;
  height: 1000px;
  padding: 0 15px;
  background: #fff;
  box-shadow: 0 0 2px rgba(0, 0, 0, 0.7);
}
.modal-header {
  display: flex;
  justify-content: space-between;
  height: 57px;
  padding: 15px 15px 0;
  border-bottom: 1px solid #e6e8ea;
}
.modal-header h3 {
  display: flex;
  align-items: center;
  gap: 6px;
  height: 24px;
  margin: 0;
  font-size: 18px;
  font-weight: 400;
  letter-spacing: 0.75px;
}
.modal-header h3 svg {
  width: 18px;
  height: 16px;
}
.modal-close {
  width: 20px;
  height: 20px;
  margin: -2px -3px 0 0;
  color: #c4c4c4;
}
.modal-body {
  padding: 15px;
}
label {
  display: block;
  height: 30px;
  line-height: 20px;
  font-size: 14px;
  font-weight: 450;
  letter-spacing: 0.4px;
}
.field {
  display: block;
  width: 100%;
  height: 45px;
  margin-bottom: 15px;
  padding: 0 14px 2px;
  border: 1px solid #ccd0da;
  border-radius: 2px;
  background: #fff;
  color: #4d5055;
  font-family: inherit;
  font-size: 14px;
  font-weight: 350;
  letter-spacing: 0.5px;
}
.field.long {
  letter-spacing: 0.37px;
}
.select {
  display: flex;
  align-items: center;
  height: 38px;
  margin-bottom: 15px;
  padding-left: 10px;
  border: 1px solid #ccc;
  border-radius: 4px;
  color: #333;
  font-weight: 350;
  letter-spacing: 0.45px;
}
.select > span {
  flex: 1;
  margin-top: -1px;
  white-space: nowrap;
}
.cell .select > span {
  letter-spacing: 0.25px;
}
.select .arrow {
  width: 37px;
  height: 20px;
  border-left: 1px solid #ccc;
  color: #ccc;
}
.add-fields {
  display: block;
  width: 100%;
  height: 42px;
  padding-bottom: 3px;
  border: 0;
  border-radius: 3px;
  background: #3f51b5;
  color: #fff;
  font: 500 17px Inter, sans-serif;
  letter-spacing: 0.3px;
}
.alert {
  height: 72px;
  margin: 15px 0 20px;
  padding: 15px;
  border: 1px solid #bce8f1;
  border-radius: 4px;
  background: #d9edf7;
  color: #31708f;
  line-height: 20px;
  font-weight: 350;
  letter-spacing: 0.53px;
  white-space: nowrap;
}
.alert svg {
  display: inline-block;
  width: 12px;
  height: 12px;
  margin-right: -1px;
  vertical-align: -1px;
}
.field-card {
  border: 1px solid #e2e4e6;
  border-radius: 4px;
  box-shadow: 0 1px 1px rgba(0, 0, 0, 0.1);
}
.field-card.next {
  height: 80px;
  margin-top: 20px;
}
.field-card-header {
  display: flex;
  justify-content: space-between;
  height: 74px;
  padding: 14px 21px 14px 20px;
  border-bottom: 1px solid #e2e4e6;
}
.field-card-header .field {
  width: 590px;
}
.card-actions {
  display: flex;
  gap: 2px;
  padding-top: 1px;
}
.card-actions button {
  display: grid;
  place-items: center;
  width: 39px;
  height: 32px;
  padding: 0;
  border: 0;
  border-radius: 3px;
  background: #3f51b5;
  color: #fff;
}
.card-actions .danger {
  width: 40px;
  background: #ed4437;
}
.card-actions svg {
  width: 11px;
  height: 11px;
}
.field-card-body {
  display: grid;
  grid-template-columns: repeat(4, 1fr);
  column-gap: 30px;
  padding: 20px 20px 20px;
  border-bottom: 1px solid #e2e4e6;
}
.field-card-footer {
  height: 19px;
}
.select.tall {
  height: 61px;
}
.select.tall .arrow {
  height: 43px;
  padding: 11px 0 12px;
}
.select .clear {
  width: 24px;
  height: 24px;
  margin-right: 6px;
  color: #ccc;
}
.chips {
  align-self: flex-start;
  padding-top: 7px;
}
.chip {
  display: inline-flex;
  align-items: center;
  height: 23px;
  padding: 0 2px 0 6px;
  border-radius: 2px;
  background: #e6e6e6;
  font-size: 12px;
}
.chip svg {
  width: 16px;
  height: 16px;
  margin-left: 7px;
}
.select.tall .chips {
  padding-top: 5px;
}
.debugbar {
  position: absolute;
  left: 0;
  bottom: 0;
  width: 40px;
  height: 33px;
  border-top: 3px solid #ff4b55;
  background: #1b2331;
}
.debugbar svg {
  width: 24px;
  height: 24px;
  margin: 3px 0 0 8px;
}
.scrollbar {
  display: flex;
  flex-direction: column;
  align-items: center;
  width: 16px;
  padding: 6px 0 4px;
  background: #fcfcfc;
}
.up, .down {
  border: 4px solid transparent;
}
.up {
  border-top: 0;
  border-bottom: 6px solid #8a8a8a;
}
.down {
  margin-top: auto;
  border-bottom: 0;
  border-top: 7px solid #8a8a8a;
}
.thumb {
  width: 9px;
  height: 217px;
  margin-top: 5px;
  border-radius: 5px;
  background: #8a8a8a;
}
.edge-bar {
  display: flex;
  flex-direction: column;
  align-items: center;
  gap: 22.200px;
  width: 54px;
  padding-top: 11px;
  background: #0c4b7b;
  color: #fff;
}
.edge-bar > svg {
  width: 18px;
  height: 18px;
}
.edge-bar > svg.add {
  width: 12px;
  height: 12px;
  margin-top: 6px;
}
.edge-bottom {
  display: flex;
  flex-direction: column;
  align-items: center;
  gap: 24px;
  width: 28px;
  margin: auto 0 13px;
  padding-top: 14px;
  border-top: 1px solid #4b7da1;
}
.edge-bottom svg {
  width: 17px;
  height: 17px;
}

/* taskbar */
.taskbar {
  position: relative;
  height: 48px;
  border-top: 1px solid #48465a;
  background: linear-gradient(90deg, #1c1b5a 0, #1e1f4c 10%, #202238 30%, #201b42 50%, #241d43 58%, #271f35 65%, #29202f 82%, #2e1b2e 100%);
  font-size: 12px;
}
.weather {
  display: flex;
  align-items: center;
  gap: 6px;
  width: 144px;
  height: 40px;
  margin-left: 12px;
  padding: 0 0 2px 6px;
  border-radius: 4px;
  background: rgba(255, 255, 255, 0.06);
  font-size: 11.500px;
  line-height: 16px;
}
.weather svg {
  width: 25px;
  height: 25px;
}
.weather span {
  color: #ccc;
}
.start {
  width: 23px;
  height: 23px;
  margin: 0 13px 0 175px;
}
.search {
  display: flex;
  align-items: center;
  gap: 11px;
  width: 220px;
  height: 32px;
  padding: 0 0 2px 11px;
  border: 1px solid #555365;
  border-radius: 16px;
  background: #424056;
  color: #ddd;
  font-size: 13px;
}
.search svg {
  width: 16px;
  height: 16px;
  stroke-width: 1.600;
}
.apps {
  display: flex;
  margin-left: 2px;
}
.apps > span {
  position: relative;
  display: grid;
  place-items: center;
  width: 43.950px;
  height: 40px;
}
.apps svg {
  width: 24px;
  height: 24px;
}
.apps b, .count {
  display: grid;
  place-items: center;
  width: 15px;
  height: 15px;
  border-radius: 50%;
  background: #c9b1e8;
  color: #222;
  font-size: 11px;
  font-weight: 400;
}
.apps b {
  position: absolute;
  top: 3px;
  right: 4px;
}
.apps .open::after {
  content: "";
  position: absolute;
  bottom: 1px;
  width: 6px;
  height: 3px;
  border-radius: 2px;
  background: #9a98a6;
}
.apps .current {
  border-radius: 4px;
  background: rgba(255, 255, 255, 0.08);
}
.apps .current::after {
  width: 16px;
  background: #c9b1e8;
}
.avatar {
  position: absolute;
  left: 10px;
  bottom: 8px;
  width: 12px;
  height: 12px;
  border-radius: 50%;
  background: radial-gradient(circle, #e2a51f 15%, #38222b 40%);
}
.avatar.grey {
  background: radial-gradient(circle at 50% 40%, #777 25%, #ddd 30%);
}
.app-text {
  fill: #fff;
  font-size: 9px;
  font-weight: 700;
}
.tray {
  display: flex;
  align-items: center;
  margin: -2px 20px 0 auto;
  line-height: 16px;
}
.tray > svg {
  width: 17px;
  height: 16px;
  margin-right: 7px;
}
.tray > svg.caret {
  width: 12px;
  height: 12px;
  margin-right: 20px;
}
.tray > svg.mic {
  width: 12px;
  margin-right: 21px;
  color: #aaa;
}
.lang {
  width: 40px;
  font-size: 11.500px;
}
.clock {
  width: 58px;
  text-align: right;
  font-size: 11.500px;
}
.count {
  margin-left: 11px;
}
```
